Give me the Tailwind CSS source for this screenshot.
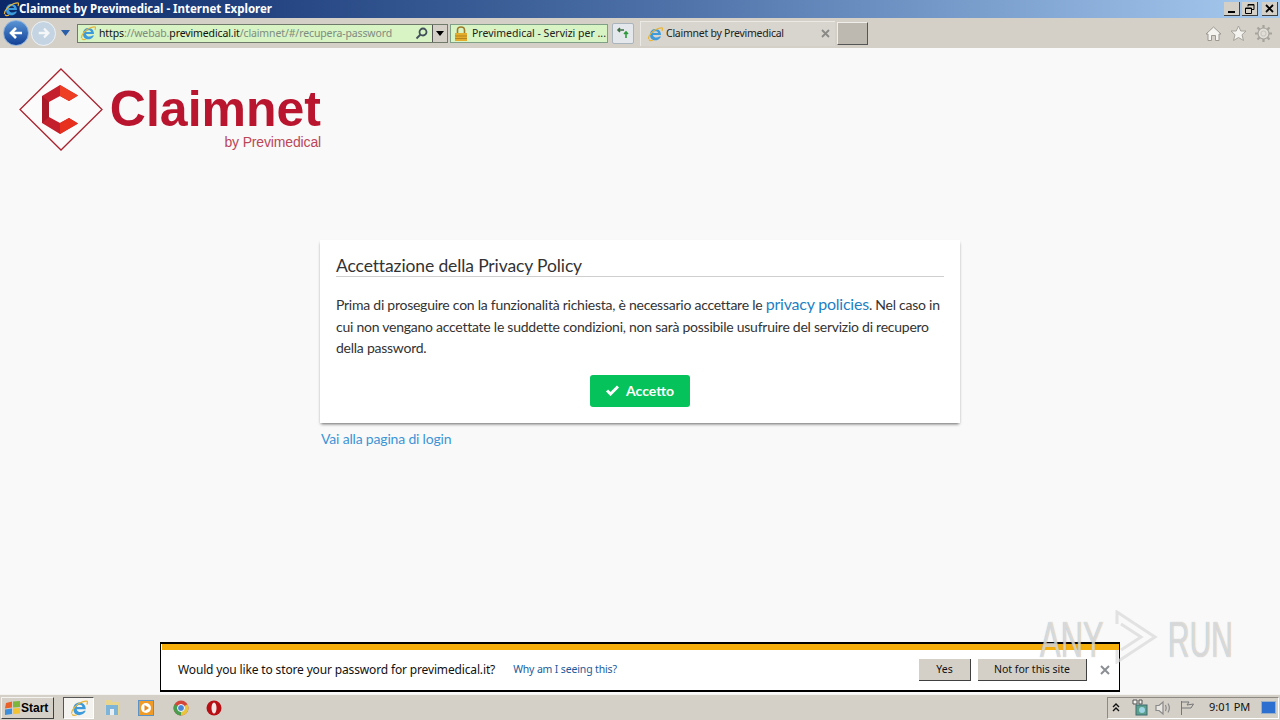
<!DOCTYPE html>
<html lang="en">
<head>
    <meta charset="UTF-8">
    <meta name="viewport" content="width=device-width, initial-scale=1.0">
    <title>Claimnet by Previmedical</title>
    <script src="https://cdn.jsdelivr.net/npm/@tailwindcss/browser@4"></script>
</head>
<body class="w-[1280px] h-[720px] overflow-hidden flex flex-col bg-[#f9f9f9] font-['Noto_Sans',sans-serif]">
    <svg class="hidden">
        <symbol id="ie" viewBox="0 0 16 16">
            <path d="M3 8.500C3 5 5.500 3 8.500 3S14 5 14 9H6C6 11.500 10 12.500 12.500 10.500H14C12.500 14 8.500 15 6 14S3 11 3 8.500ZM6 7H11C11 4.500 6.500 4.500 6 7Z" fill="#3d9bdc" fill-rule="evenodd"/>
            <path d="M1.500 13C1 10 6 4 11 2.500S16 2 15 5M2 13.500C2.500 15 4.500 14.800 6 14" fill="none" stroke="#e8b53a" stroke-width="1.200"/>
        </symbol>
    </svg>

    <!-- title bar -->
    <div class="h-[18px] shrink-0 flex items-center bg-gradient-to-r from-[#0b2768] via-[#4a6ea5] to-[#a8cbf0] pl-[3px] pr-[2px]">
        <svg class="w-[16px] h-[16px]"><use href="#ie"/></svg>
        <span class="text-white font-bold text-[11.500px] tracking-[-0.02px] leading-none">Claimnet by Previmedical - Internet Explorer</span>
        <div class="ml-auto flex gap-[2px]">
            <div class="w-[16px] h-[14px] bg-[#d4d0c8] border-r border-b border-[#404040] flex items-end justify-center pb-[2px]"><div class="w-[7px] h-[2px] bg-black"></div></div>
            <div class="w-[16px] h-[14px] bg-[#d4d0c8] border-r border-b border-[#404040] flex items-center justify-center">
                <svg class="w-[10px] h-[10px]" viewBox="0 0 10 10" fill="none" stroke="#000"><path d="M3 2.500V.5H9V5.500H7M.5 4H6.500V9.500H.5Z"/><path d="M3 1H9M1 4.500H6"/></svg>
            </div>
            <div class="w-[16px] h-[14px] bg-[#d4d0c8] border-r border-b border-[#404040] ml-[2px] flex items-center justify-center">
                <svg class="w-[9px] h-[9px]" viewBox="0 0 9 9" stroke="#000" stroke-width="1.800"><path d="M1 1L8 8M8 1L1 8"/></svg>
            </div>
        </div>
    </div>

    <!-- toolbar -->
    <div class="h-[30px] shrink-0 flex items-center bg-[#d4d0c8] pl-[3px] pr-[8px] text-[11px] text-[#222]">
        <div class="w-[26px] h-[26px] rounded-full bg-gradient-to-b from-[#5a94d4] to-[#123f96] border border-[#8fb4dc] flex items-center justify-center">
            <svg class="w-[16px] h-[16px]" viewBox="0 0 16 16" fill="none" stroke="#fff" stroke-width="2.600"><path d="M14 8H3M8 3L3 8L8 13"/></svg>
        </div>
        <div class="ml-[2px] w-[25px] h-[25px] rounded-full bg-[#c4d4e2] border border-[#eef2f5] flex items-center justify-center">
            <svg class="w-[14px] h-[14px]" viewBox="0 0 16 16" fill="none" stroke="#f4f6f8" stroke-width="2.600"><path d="M2 8H13M8 3L13 8L8 13"/></svg>
        </div>
        <svg class="ml-[5px] w-[9px] h-[6px]" viewBox="0 0 9 6"><path d="M0 0H9L4.500 6Z" fill="#2a5ea8"/></svg>
        <div class="ml-[7px] w-[371px] h-[19px] border border-[#6f7a6a] bg-[#d8f3c4] flex items-center">
            <svg class="ml-[2px] w-[16px] h-[16px]"><use href="#ie"/></svg>
            <span class="ml-[3px] pt-[1px] whitespace-nowrap text-[10.500px] tracking-[-0.12px] text-[#7d8c82]"><span class="text-[#111]">https</span>://webab.<span class="text-[#111]">previmedical.it</span>/claimnet/#/recupera-password</span>
            <svg class="ml-auto mr-[2px] w-[13px] h-[13px]" viewBox="0 0 13 13" fill="none" stroke="#41505a" stroke-width="1.800"><circle cx="8" cy="5" r="3.500"/><path d="M5.500 7.500L1.500 11.500"/></svg>
            <div class="ml-[2px] w-[15px] h-full bg-[#d4d0c8] border-l border-[#555] flex items-center justify-center">
                <svg class="w-[8px] h-[5px]" viewBox="0 0 8 5"><path d="M0 0H8L4 5Z" fill="#000"/></svg>
            </div>
        </div>
        <div class="ml-[2px] w-[158px] h-[19px] border border-[#7f9f86] bg-[#d8f3c4] flex items-center whitespace-nowrap">
            <svg class="ml-[2px] w-[16px] h-[17px]" viewBox="0 0 16 17"><path d="M4.500 8V5C4.500 1 11.500 1 11.500 5V8" fill="none" stroke="#9c7a2a" stroke-width="1.600"/><rect x="2" y="8" width="12" height="8" fill="#e3ac2c"/><path d="M2 11H14M2 13.500H14" stroke="#b5841c"/></svg>
            <span class="ml-[3px] pt-[1px] text-[10.500px]">Previmedical - Servizi per ...</span>
        </div>
        <div class="ml-[4px] w-[22px] h-[21px] rounded-[2px] border border-[#aab4bc] bg-[#e4e8ec] flex items-center justify-center">
            <svg class="w-[14px] h-[12px]" viewBox="0 0 14 12" fill="none" stroke-width="1.600"><path d="M8 3H2M4 1L2 3L4 5" stroke="#3c6e44"/><path d="M10 11V5M8 7L10 5L12 7" stroke="#2e9a3c"/></svg>
        </div>
        <div class="ml-[6px] w-[195px] h-[25px] bg-[#d8d5ce] border-t border-l border-[#ebe9e4] flex items-center whitespace-nowrap">
            <svg class="ml-[6px] w-[16px] h-[16px]"><use href="#ie"/></svg>
            <span class="ml-[3px] pt-[1px] text-[10.500px] tracking-[-0.25px]">Claimnet by Previmedical</span>
            <svg class="ml-auto mr-[5px] w-[9px] h-[9px]" viewBox="0 0 9 9" stroke="#8a8a86" stroke-width="1.800"><path d="M1 1L8 8M8 1L1 8"/></svg>
        </div>
        <div class="ml-[2px] w-[31px] h-[23px] bg-[#bdb9b1] border border-[#f0eeea] border-r-[#555] border-b-[#555]"></div>
        <div class="ml-auto flex items-center gap-[8px]">
            <svg class="w-[17px] h-[17px]" viewBox="0 0 17 17" fill="#f4f3ef" stroke="#9a9890"><path d="M1 9L8.500 2L16 9H14V15.500H10.500V10.500H6.500V15.500H3V9Z"/></svg>
            <svg class="w-[17px] h-[17px]" viewBox="0 0 17 17" fill="#f4f3ef" stroke="#a5a39b"><path d="M8.500 1L10.800 6H16L12 9.800L13.500 15.500L8.500 12.500L3.500 15.500L5 9.800L1 6H6.200Z"/></svg>
            <svg class="w-[17px] h-[17px]" viewBox="0 0 17 17" fill="none" stroke="#a5a39b" stroke-width="1.200"><circle cx="8.500" cy="8.500" r="2.500"/><circle cx="8.500" cy="8.500" r="5.500" fill="#eeece8" fill-opacity=".5"/><path d="M8.500 0V3M8.500 14V17M0 8.500H3M14 8.500H17M2.500 2.500L4.500 4.500M12.500 12.500L14.500 14.500M14.500 2.500L12.500 4.500M4.500 12.500L2.500 14.500" stroke-width="2.200"/></svg>
        </div>
    </div>

    <!-- page -->
    <div class="relative flex-1 flex flex-col">
        <div class="flex pl-[19px] pt-[20px]">
            <svg class="w-[84px] h-[83px] shrink-0" viewBox="0 0 84 83">
                <path d="M42 1L83 41.500L42 82L1 41.500Z" fill="#fbfbfb" stroke="#a9242f" stroke-width="1.300"/>
                <path d="M41 17L59 27.500L50 33L41 28L30 34V49L41 55L50 50L59 55.500L41 66L23 55V28Z" fill="#c41f2c"/>
                <path d="M41 17L59 27.500L50 33L41 28Z" fill="#ee3f24"/>
                <path d="M23 28L30 34V49L23 55Z" fill="#a81828"/>
                <path d="M41 55L50 50L59 55.500L41 66Z" fill="#e8301f"/>
            </svg>
            <div class="ml-[6px] w-[212px] flex flex-col items-end font-['Liberation_Sans',sans-serif]">
                <div class="mt-[16px] text-[50px] leading-[50px] font-bold text-[#b9152f]">Claimnet</div>
                <div class="text-[14px] leading-[16px] text-[#bb4658] tracking-[-0.150px]">by Previmedical</div>
            </div>
        </div>

        <div class="w-[640px] h-[183px] mt-[89px] mx-auto bg-white px-[16px] pt-[15px] shadow-[0_2px_3px_-1px_rgba(0,0,0,0.6)] font-['Lato',sans-serif] text-[#333]">
            <h1 class="h-[22px] border-b border-[#cfcfcf] text-[17.500px] leading-[21px] tracking-[-0.120px] text-[#333]">Accettazione della Privacy Policy</h1>
            <p class="mt-[17px] text-[14px] leading-[21.500px] tracking-[-0.250px]">Prima di proseguire con la funzionalità richiesta, è necessario accettare le <a class="inline-block text-[16px] leading-[20px] tracking-[-0.220px] text-[#1f7fc4]">privacy policies</a>. Nel caso in cui non vengano accettate le suddette condizioni, non sarà possibile usufruire del servizio di recupero della password.</p>
            <div class="mt-[16px] flex justify-center">
                <button class="w-[100px] h-[32px] rounded-[3px] bg-[#05c25a] text-white text-[14px] font-bold flex items-center justify-center gap-[7px]">
                    <svg class="w-[13px] h-[11px]" viewBox="0 0 13 11" fill="none" stroke="#fff" stroke-width="3"><path d="M1 5.500L4.500 9L12 1.500"/></svg>
                    Accetto
                </button>
            </div>
        </div>
        <a class="ml-[321px] mt-[5px] text-[14px] leading-[22px] tracking-[-0.180px] text-[#3d94d6] font-['Lato',sans-serif]">Vai alla pagina di login</a>

        <!-- password prompt -->
        <div class="absolute left-[160px] top-[594px] w-[960px] h-[50px] bg-white border border-black border-b-2 border-t-2 flex items-center pl-[17px] pr-[9px] pt-[6px]">
            <div class="absolute left-[1px] right-0 top-0 h-[6px] bg-[#f5ae0a]"></div>
            <span class="text-[12px] tracking-[-0.150px] text-[#111]">Would you like to store your password for previmedical.it?</span>
            <a class="ml-[18px] text-[10.500px] tracking-[-0.150px] text-[#1c5a9a]">Why am I seeing this?</a>
            <button class="ml-auto w-[52px] h-[22px] bg-[#d4d0c8] border-r border-b border-[#404040] text-[10.500px] text-[#111]">Yes</button>
            <button class="ml-[7px] w-[109px] h-[22px] bg-[#d4d0c8] border-r border-b border-[#404040] text-[10.500px] text-[#111]">Not for this site</button>
            <svg class="ml-[13px] w-[10px] h-[10px]" viewBox="0 0 10 10" stroke="#8a8f94" stroke-width="2"><path d="M1 1L9 9M9 1L1 9"/></svg>
        </div>

        <!-- watermark -->
        <div class="absolute left-[1040px] top-[562px] w-[192px] h-[54px] flex items-center font-['Liberation_Sans',sans-serif] text-white/60 text-[50px] leading-none pt-[6px] [text-shadow:0_0_1px_rgba(120,120,120,0.7)]">
            <span class="w-[65px] shrink-0 whitespace-nowrap scale-x-[0.62] origin-left">ANY</span>
            <svg class="w-[55px] h-[54px] shrink-0 -mt-[6px]" viewBox="0 0 55 54" fill="none" stroke="#d8d8d8" stroke-width="3" stroke-opacity=".7"><path d="M12 14V2L50 27L12 52V40M16 14L36 27L16 40"/></svg>
            <span class="ml-[8px] shrink-0 whitespace-nowrap scale-x-[0.6] origin-left">RUN</span>
        </div>
    </div>

    <!-- taskbar -->
    <div class="h-[26px] shrink-0 flex items-center bg-[#d4d0c8] border-t border-[#f4f3ef]">
        <div class="ml-[1px] w-[53px] h-[22px] bg-[#d4d0c8] border border-[#f4f3ef] border-r-[#404040] border-b-[#404040] flex items-center">
            <svg class="ml-[2px] w-[17px] h-[16px] shrink-0" viewBox="0 0 17 16"><path d="M2 3L8 1.500V7.500L1 8.500Z" fill="#e8622a"/><path d="M9 1.500L16 1V7L9 7.500Z" fill="#7cb63c"/><path d="M1 9.500L8 8.500V14L1 15Z" fill="#3d8fdc"/><path d="M9 8.500L16 8V13.500L9 14Z" fill="#f2c230"/></svg>
            <span class="font-['Liberation_Sans',sans-serif] font-bold text-[12px] text-black">Start</span>
        </div>
        <div class="ml-[9px] w-[31px] h-[22px] bg-[#f4f3ef] border border-[#555] border-r-white border-b-white flex items-center justify-center">
            <svg class="w-[18px] h-[18px]"><use href="#ie"/></svg>
        </div>
        <svg class="ml-[10px] w-[16px] h-[16px]" viewBox="0 0 16 16"><path d="M1 0H7L8.500 2H15V15H1Z" fill="#e8d590"/><rect x="2" y="5" width="12" height="10" fill="#7db4d8"/><rect x="6" y="9" width="4" height="6" fill="#e8eef2"/></svg>
        <svg class="ml-[18px] w-[16px] h-[16px]" viewBox="0 0 16 16"><rect x=".5" y=".5" width="15" height="15" fill="#f09a28" stroke="#5b93c8"/><circle cx="8" cy="8" r="5" fill="#fff"/><path d="M6.500 5L11 8L6.500 11Z" fill="#e88a1c"/></svg>
        <svg class="ml-[19px] w-[16px] h-[16px]" viewBox="0 0 16 16"><circle cx="8" cy="8" r="7.500" fill="#d4463a"/><path d="M8 8L14.500 4.300A7.500 7.500 0 0 1 8 15.500Z" fill="#e8c53a"/><path d="M8 8V15.500A7.500 7.500 0 0 1 1.500 4.300Z" fill="#4a9c4e"/><circle cx="8" cy="8" r="3.500" fill="#4a86d8" stroke="#fff"/></svg>
        <svg class="ml-[17px] w-[16px] h-[16px]" viewBox="0 0 16 16"><circle cx="8" cy="8" r="7.500" fill="#b80f14"/><ellipse cx="8" cy="8" rx="2.500" ry="5.500" fill="#f6e6e6"/></svg>

        <div class="ml-auto mr-[1px] w-[172px] h-[22px] border border-[#8d8a83] border-r-white border-b-white flex items-center pl-[4px] text-[11px] text-[#111] whitespace-nowrap">
            <svg class="w-[8px] h-[9px]" viewBox="0 0 8 9" fill="none" stroke="#111" stroke-width="1.400"><path d="M1 4L4 1L7 4M1 8L4 5L7 8"/></svg>
            <svg class="ml-[12px] w-[16px] h-[17px]" viewBox="0 0 16 17"><path d="M1 1H5V5H1ZM7 1H10V5H7Z" fill="#f4f3ef" stroke="#555"/><rect x="4" y="6" width="11" height="10" fill="#5aa08c" stroke="#3f6c70"/><circle cx="10" cy="11" r="3" fill="#9cd4e4"/></svg>
            <svg class="ml-[7px] w-[17px] h-[16px]" viewBox="0 0 17 16" fill="none" stroke="#8a8a8a" stroke-width="1.200"><path d="M1 5.500H4L8 2V14L4 10.500H1Z" fill="#e8e6e0"/><path d="M10.500 5C11.500 7 11.500 9 10.500 11M13 3.500C14.500 6 14.500 10 13 12.500"/></svg>
            <svg class="ml-[7px] w-[17px] h-[16px]" viewBox="0 0 17 16" fill="none" stroke="#777"><path d="M2.500 1V15M2.500 2H10L8 5L14.500 4L12 8H2.500"/></svg>
            <span class="ml-[13px]">9:01 PM</span>
            <div class="ml-auto mr-[2px] w-[15px] h-[13px] bg-[#2c6fd0] border border-[#9ab0c8]"></div>
        </div>
    </div>
</body>
</html>
